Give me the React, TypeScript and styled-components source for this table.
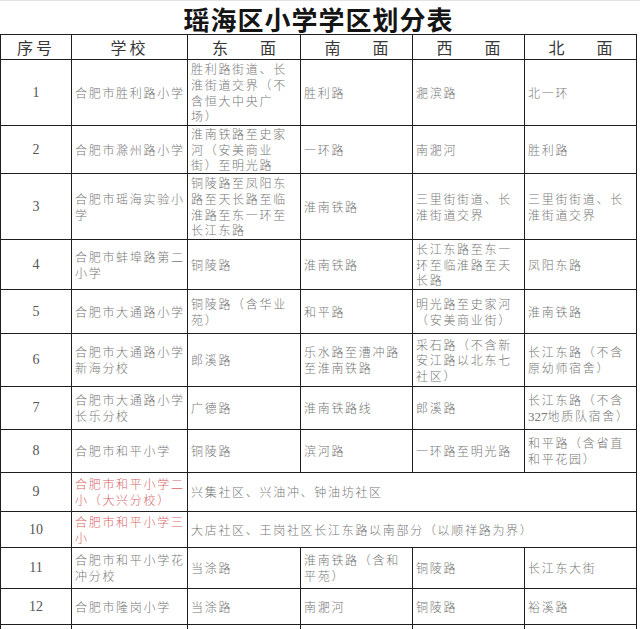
import React from 'react'
import styled, { createGlobalStyle } from 'styled-components'

const GlobalStyle = createGlobalStyle`
  html, body {
    margin: 0;
    padding: 0;
    background: #ffffff;
  }
  body {
    font-family: "Noto Sans CJK SC", "Noto Sans", sans-serif;
  }
`

const Page = styled.div`
  width: 640px;
  padding-top: 2px;
  background: #ffffff;
  border-top: 1px solid #e2e2e2;
`

const Sheet = styled.table`
  width: 637px;
  table-layout: fixed;
  border-collapse: collapse;
`

const TitleCell = styled.td`
  height: 31px;
  padding: 0;
  text-align: center;
  font-family: "Noto Sans CJK SC", sans-serif;
  font-size: 26px;
  font-weight: 700;
  letter-spacing: 1px;
  color: #151515;
  line-height: 31px;
`

const HeadCell = styled.th<{ $spacing?: number }>`
  height: 24px;
  padding: 0;
  border: 1px solid #1e1e1e;
  text-align: center;
  font-family: "Noto Sans CJK SC", sans-serif;
  font-size: 16px;
  font-weight: 400;
  color: #383838;
  letter-spacing: ${p => p.$spacing ?? 3}px;
  white-space: pre;
  line-height: 24px;
`

const NumCell = styled.td`
  padding: 0;
  border: 1px solid #1e1e1e;
  text-align: center;
  vertical-align: middle;
  font-family: "Liberation Serif", "Times New Roman", serif;
  font-size: 14px;
  color: #555555;
`

const TextCell = styled.td<{ $red?: boolean }>`
  padding: 0 2px 0 3px;
  border: 1px solid #1e1e1e;
  vertical-align: middle;
  font-family: "Noto Sans CJK SC", sans-serif;
  font-size: 12px;
  font-weight: 300;
  line-height: 15.6px;
  letter-spacing: 1.7px;
  color: ${p => (p.$red ? '#d66666' : '#777777')};
  white-space: nowrap;
  overflow: hidden;
`

const Digits = styled.span`
  font-family: "Liberation Serif", serif;
  font-size: 13px;
  letter-spacing: 0;
`

type Row = {
  no?: number
  h: number
  school?: string[]
  red?: boolean
  east?: string[]
  south?: string[]
  west?: string[]
  north?: string[]
  merged?: string[]
}

const rows: Row[] = [
  {
    no: 1, h: 66, school: ['合肥市胜利路小学'],
    east: ['胜利路街道、长', '淮街道交界（不', '含恒大中央广', '场）'],
    south: ['胜利路'], west: ['淝滨路'], north: ['北一环'],
  },
  {
    no: 2, h: 48, school: ['合肥市滁州路小学'],
    east: ['淮南铁路至史家', '河（安美商业', '街）至明光路'],
    south: ['一环路'], west: ['南淝河'], north: ['胜利路'],
  },
  {
    no: 3, h: 66, school: ['合肥市瑶海实验小', '学'],
    east: ['铜陵路至凤阳东', '路至天长路至临', '淮路至东一环至', '长江东路'],
    south: ['淮南铁路'], west: ['三里街街道、长', '淮街道交界'], north: ['三里街街道、长', '淮街道交界'],
  },
  {
    no: 4, h: 50, school: ['合肥市蚌埠路第二', '小学'],
    east: ['铜陵路'], south: ['淮南铁路'],
    west: ['长江东路至东一', '环至临淮路至天', '长路'], north: ['凤阳东路'],
  },
  {
    no: 5, h: 44, school: ['合肥市大通路小学'],
    east: ['铜陵路（含华业', '苑）'], south: ['和平路'],
    west: ['明光路至史家河', '（安美商业街）'], north: ['淮南铁路'],
  },
  {
    no: 6, h: 53, school: ['合肥市大通路小学', '新海分校'],
    east: ['郎溪路'], south: ['乐水路至漕冲路', '至淮南铁路'],
    west: ['采石路（不含新', '安江路以北东七', '社区）'], north: ['长江东路（不含', '原幼师宿舍）'],
  },
  {
    no: 7, h: 43, school: ['合肥市大通路小学', '长乐分校'],
    east: ['广德路'], south: ['淮南铁路线'], west: ['郎溪路'],
    north: ['长江东路（不含', '#327#地质队宿舍）'],
  },
  {
    no: 8, h: 43, school: ['合肥市和平小学'],
    east: ['铜陵路'], south: ['滨河路'], west: ['一环路至明光路'],
    north: ['和平路（含省直', '和平花园）'],
  },
  {
    no: 9, h: 39, red: true, school: ['合肥市和平小学二', '小（大兴分校）'],
    merged: ['兴集社区、兴油冲、钟油坊社区'],
  },
  {
    no: 10, h: 36, red: true, school: ['合肥市和平小学三', '小'],
    merged: ['大店社区、王岗社区长江东路以南部分（以顺祥路为界）'],
  },
  {
    no: 11, h: 41, school: ['合肥市和平小学花', '冲分校'],
    east: ['当涂路'], south: ['淮南铁路（含和', '平苑）'], west: ['铜陵路'], north: ['长江东大街'],
  },
  {
    no: 12, h: 36, school: ['合肥市隆岗小学'],
    east: ['当涂路'], south: ['南淝河'], west: ['铜陵路'], north: ['裕溪路'],
  },
  { h: 30 },
]

// lines may carry a #...# span that is set in the serif digit face
const renderLine = (line: string) => {
  const parts = line.split('#')
  return parts.map((part, i) =>
    i % 2 === 1 ? <Digits key={i}>{part}</Digits> : <React.Fragment key={i}>{part}</React.Fragment>
  )
}

const Lines: React.FC<{ lines?: string[] }> = ({ lines }) => (
  <>
    {(lines ?? []).map((line, i) => (
      <React.Fragment key={i}>
        {i > 0 && <br />}
        {renderLine(line)}
      </React.Fragment>
    ))}
  </>
)

const App: React.FC = () => {
  return (
    <Page>
      <GlobalStyle />
      <Sheet>
        <colgroup>
          <col style={{ width: 71 }} />
          <col style={{ width: 116 }} />
          <col style={{ width: 113 }} />
          <col style={{ width: 112 }} />
          <col style={{ width: 112 }} />
          <col style={{ width: 112 }} />
        </colgroup>
        <tbody>
          <tr>
            <TitleCell colSpan={6}>瑶海区小学学区划分表</TitleCell>
          </tr>
          <tr>
            <HeadCell $spacing={3}>序号</HeadCell>
            <HeadCell $spacing={3}>学校</HeadCell>
            <HeadCell $spacing={0}>{'东　　面'}</HeadCell>
            <HeadCell $spacing={0}>{'南　　面'}</HeadCell>
            <HeadCell $spacing={0}>{'西　　面'}</HeadCell>
            <HeadCell $spacing={0}>{'北　　面'}</HeadCell>
          </tr>
          {rows.map((row, i) => (
            <tr key={i} style={{ height: row.h }}>
              <NumCell>{row.no}</NumCell>
              <TextCell $red={row.red}>
                <Lines lines={row.school} />
              </TextCell>
              {row.merged ? (
                <TextCell colSpan={4}>
                  <Lines lines={row.merged} />
                </TextCell>
              ) : (
                <>
                  <TextCell><Lines lines={row.east} /></TextCell>
                  <TextCell><Lines lines={row.south} /></TextCell>
                  <TextCell><Lines lines={row.west} /></TextCell>
                  <TextCell><Lines lines={row.north} /></TextCell>
                </>
              )}
            </tr>
          ))}
        </tbody>
      </Sheet>
    </Page>
  )
}

export default App
